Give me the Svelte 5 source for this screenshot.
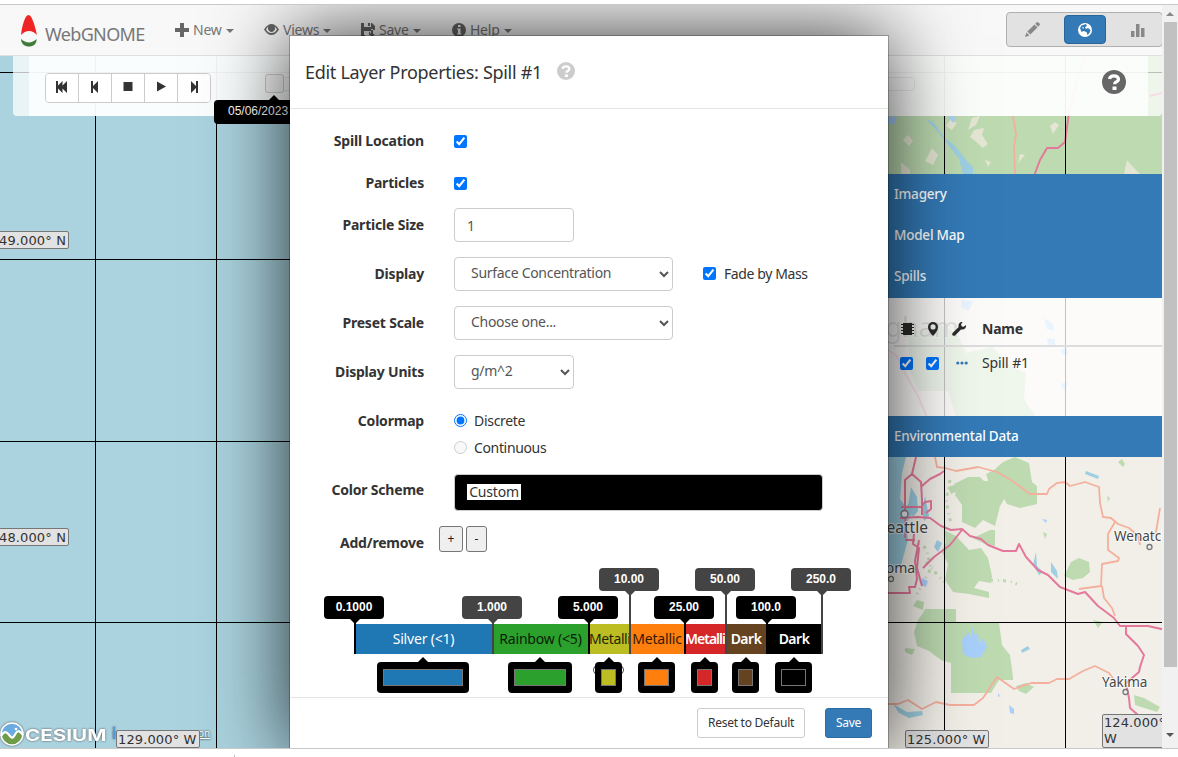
<script>
  const stops = [
    { at: 0, label: '0.1000', high: false },
    { at: 138, label: '1.000', high: false, grey: true },
    { at: 234, label: '5.000', high: false },
    { at: 275, label: '10.00', high: true, grey: true },
    { at: 330, label: '25.00', high: false },
    { at: 371, label: '50.00', high: true, grey: true },
    { at: 412, label: '100.0', high: false },
    { at: 467, label: '250.0', high: true, grey: true }
  ];
  const bands = [
    { name: 'Silver (<1)', color: '#1f77b4', text: '#fff', w: 138, sw: 80 },
    { name: 'Rainbow (<5)', color: '#2ca02c', text: '#082008', w: 96, sw: 52 },
    { name: 'Metallic', color: '#bcbd22', text: '#252506', w: 41, sw: 15, ring: true, left: true },
    { name: 'Metallic', color: '#ff7f0e', text: '#331902', w: 55, sw: 25 },
    { name: 'Metallic', color: '#d62728', text: '#fff', w: 41, sw: 15, bold: true, left: true },
    { name: 'Dark', color: '#654321', text: '#fff', w: 41, sw: 15, bold: true },
    { name: 'Dark', color: '#000', text: '#fff', w: 55, sw: 25, bold: true }
  ];
  const playback = [
    'M1 1h2v4.500l4.500-4.500v4.500l4.500-4.500v12l-4.500-4.500v4.500l-4.500-4.500v4.500h-2z',
    'M3 1h2v5l5-5v12l-5-5v5h-2z',
    'M2.500 2h9v9h-9z',
    'M3 1.500l9 5-9 5z',
    'M11 1h-2v5l-5-5v12l5-5v5h2z'
  ];
</script>

<div class="viewport">
  <div class="page">
    <svg class="map" width="1162" height="743" viewBox="0 5 1162 743">
      <rect y="5" width="1162" height="743" fill="#aad3df" />
      <rect x="870" y="5" width="292" height="743" fill="#f2efe9" />
      <g fill="#bddab1">
        <path d="M870 50h292v125h-292z" />
        <path d="M908 335l30-12 20 12 8 18 26-6 20 20 14 6-2 26 12 18h-80l-8-26h-30l-8-20z" />
        <path d="M1003 462l12-5 14 6 3 19 5 4v18l-17 4-13-4-9-16-8-2-4-12 8-4z" />
        <path d="M968 477h12l4 4h18l4 6v9l-6 10-5 20-12-6-8 8-13-6v-17l-7-10 2-8-3-3 8-4z" />
        <path d="M990 530h5v16l-10-2-12-6z" />
        <path d="M944 530l12 6 13 14 12-2 7 10 4 18-1 7-12-2-5 7 15 4v6l-20-4-16-2-8-12 3-16-6-12 4-10z" />
        <path d="M925 609h31v14h43l3 22 8 10 3 22v3h-14l-8 13h-40v-30l-10-3-12-9-12-5-3-14 4-12 5-7z" />
        <path d="M1016 686l10-3 8 4-8 7-7-3zM1071 562l8-4 10 4 1 10-7 6-10 2-9-4zM1134 695l10 3 16 9-3 5-22-7zM948 487l12-4 4 5-13 6z" />
        <path d="M1118 462l4-3 3 5-2 3zM1107 496l3 2-2 4zM1043 532l4 2-2 5zM905 648l10 1-3 6-7-3zM917 600l7 2-1 8-10-4zM1093 620l10 2-5 6z" />
      </g>
      <g fill="#e4e5d2">
        <path d="M950 120l7 3-5 7-6-4zM974 130l10-2-2 7 6 9-5 4-8-7-5-4zM985 160l6 2-3 5zM908 135l5 6-4 5-6-6zM932 148l6 7-5 10-8-4zM901 162l9 8v4h-9zM1050 126l5-4 4 3-6 9zM1127 160l5 6 8 8h-16z" />
        <path d="M1020 154l5 1-7 8zM972 118l8-2-4 9-8 5z" />
      </g>
      <g fill="none" stroke="#bddab1" stroke-width="3" stroke-dasharray="3 5 1 4">
        <path d="M950 480l-4 20 5 24M912 540l14 8 5 20-14 26M1000 468l10 13 17 5M990 580l19 1 8 3M1075 565l7 12M926 562l18 20" />
      </g>
      <g fill="#9ecfe2">
        <path d="M926 119l7 3 11 15 11 9 12 15 6 6v7h-10l-4-15-10-13-10-13z" />
        <path d="M888 457h18l-4 16-2 26 6 8 6-8 3 11-9 13 2 17-7 25-6 6h-7z" />
        <path d="M911 487l6 10 1 14-5 6-5-11zM925 496l4 20-5 5-2-10zM937 540l5 3-4 9-4-5z" />
        <path d="M893 704l14 8 15-1 1 4-14 3-10-5zM1086 471l13 5-1 3-13-5zM1036 552l1 14 6 6-4 3-6-10zM1051 562l6 9 1 8-7-7zM1021 650l7-4 2 3-8 4z" />
      </g>
      <g fill="#a8d0fb">
        <path d="M888 116l9 1-3 8-6-2zM948 116l8 1-3 6zM1044 318l9 6 1 7-7-2zM1047 338l8 1v8h-7zM1060 350l7-2 1 7-6-1zM1060 384l8-2-3 9zM961 300l12 1-4 10-8-4z" />
        <path d="M962 640l6-8 3 5 1-11 3 9 3-2 1 11 4-6 4 9-6 10-10 1-8-4zM1042 519l5 1-1 3zM1009 705l5 4v5l-4-1zM998 693l2 3-2 1zM922 578l6 3-2 6-5-2z" />
      </g>
      <g fill="none" stroke="#f4b09c" stroke-width="1.800" stroke-linejoin="round">
        <path d="M1013 116l3 18-2 14 1 26" />
        <path d="M935 457l2 10 8 1 11 3 22-4 19 5 14 8 19 14h17l2-5 8-6 8-1 5 4 15-4 14 5 1 16 3 14 8 1 7 6 11 4 9 8 2 9" />
        <path d="M1115 522l-7 12v16l11 8-1 3-16 3-1 22-22 3M1102 586l2 12 8 10 3 8M1160 508l-4 24-5 5" />
        <path d="M888 704h10l10-4 14 9 14-7 14 3h24l9-7 14-21 17 12 17-6h18l8-4h12l14-8 12-5 14 7 6 8" />
      </g>
      <g fill="none" stroke="#e4799b" stroke-width="2" stroke-linejoin="round">
        <path d="M1085 56l-8 24-8 32-4 30-7 6h-11l-7 12-6 16" />
        <path d="M1150 96l12-3" />
        <path d="M916 457l-4 17-7 6v38l1 8-1 12M912 474l9 8 1 18v15M922 486l8-7 10-5 4-3M901 507h20l4-5 6-1v8l-5 4M900 518l18-1 12 1 11 8 10 4 11-1 8 7 11 3 7 6 15 6h13l3-7 7 13 12 13 10 5 12 12 18 7 7-2 13 14 16 12 6 8h28l18 4M888 593h22l-1-6h6l2-8-2-18 4-21M905 540l10 0M914 534l-1 10 6 4-2 20 5 18M923 568l11-11 16-12 8-10 4-5" />
        <path d="M1126 627v7l12 12 6 9-4 12-1 5-14 12M1126 684l3 14 1 10 8 7" />
        <path d="M880 345l16 10 9 18 14 25 9 22" stroke-opacity=".7" />
      </g>
      <g fill="#eee" stroke="#777" stroke-width="1.300">
        <circle cx="904.500" cy="514" r="3.500" /><circle cx="891" cy="579" r="2.500" />
        <circle cx="1149.500" cy="547" r="2.500" /><circle cx="1125.500" cy="692" r="2.500" />
      </g>
      <g class="place">
        <text x="878" y="533" font-size="15.500">Seattle</text>
        <text x="879" y="573" font-size="14">coma</text>
        <text x="1114" y="541" font-size="13.500">Wenatchee</text>
        <text x="1102" y="687" font-size="13.500">Yakima</text>
        <text x="959" y="337" font-size="27" text-anchor="end" opacity=".6">Bellingham</text>
      </g>
      <path d="M95.500 5v743M216.500 5v743M944.500 5v743M1065.500 5v743M0 72.500h1162M0 259.500h1162M0 441.500h1162M0 622.500h1162" fill="none" stroke="#000" />
    </svg>

    <nav class="navbar">
      <div class="brand">
        <svg width="18" height="34" viewBox="0 0 18 34">
          <path d="M1 21C2 12 5 1 8.500 1S15 12 17 21C12 15.500 6 15.500 1 21z" fill="#ee2524" />
          <path d="M1 25c5 4.500 11 4.500 15.500 0C17 30 13 32.500 9 32.500S1 30 1 25z" fill="#3f7c39" />
        </svg>
        <span>WebGNOME</span>
      </div>
      <div class="menus">
        <span class="m1"><svg width="14" height="14" viewBox="0 0 14 14"><path d="M5 0h4v5h5v4h-5v5h-4v-5h-5v-4h5z" /></svg>New<i class="caret"></i></span>
        <span class="m2"><svg width="15" height="13" viewBox="0 0 15 13"><path fill-rule="evenodd" d="M0 6.500Q3.500 1 7.500 1T15 6.500Q11.500 12 7.500 12T0 6.500zM2 6.500Q4 10 7.500 10T13 6.500Q12 4.500 10.500 3.600A3.500 3.500 0 1 1 4.500 3.600Q3 4.500 2 6.500z" /><circle cx="7.500" cy="5.500" r="2.800" /></svg>Views<i class="caret"></i></span>
        <span class="m3"><svg width="14" height="14" viewBox="0 0 14 14"><path fill-rule="evenodd" d="M0 0h3v4h7v-4h1l3 3v4h-2v-1h-2v2h-2l2 3v1h-2v-4h-5v4h1v2h-4zM7 0h2v3h-2z" /><path d="M10 7h2v4h2l-3 3-3-3h2z" /></svg>Save<i class="caret"></i></span>
        <span class="m4"><svg width="14" height="14" viewBox="0 0 14 14"><path fill-rule="evenodd" d="M7 0a7 7 0 1 1 0 14A7 7 0 0 1 7 0zM6 2v2h2.500v-2zM5 5.500v1h1v4h-1v1h4.500v-1h-1v-5z" /></svg>Help<i class="caret"></i></span>
      </div>
      <div class="modes">
        <span><svg width="15" height="15" viewBox="0 0 15 15" fill="#888"><path d="M0 15l1.500-4.500 3 3zM2.300 9.600l7.200-7.100 3 3-7.200 7.100zM10.300 1.700l1.200-1.200q1-.8 2 .1l1 1q.8 1-.1 1.900l-1.200 1.200z" /></svg></span>
        <span class="on"><svg width="14" height="14" viewBox="0 0 14 14"><circle cx="7" cy="7" r="7" fill="#fff" /><path d="M3.500 2.500L8 1l1 2-2 1 1 2 2-1 2.500 2-1 3-2 2-1-3-3-1-2 1-1.500-4z" fill="#337ab7" /><path d="M8.500 2.500l2 1-1 1.500zM3.500 5l2-1 .5 1.500z" fill="#fff" /></svg></span>
        <span><svg width="14" height="14" viewBox="0 0 14 14" fill="#888"><path d="M0 8h3.500v6h-3.500zM5 1h3.500v13h-3.500zM10 5h3.500v9h-3.500z" /></svg></span>
      </div>
    </nav>

    <div class="toolbar">
      <div class="inner">
        <div class="play">
          {#each playback as d}
            <button aria-label="playback"><svg width="14" height="14" viewBox="0 0 14 14"><path {d} fill="#333" /></svg></button>
          {/each}
        </div>
        <div class="slider"><i></i><b>05/06/2023</b></div>
      </div>
      <svg class="help" width="24" height="24" viewBox="0 0 24 24"><circle cx="12" cy="12" r="12" fill="#666" /><path d="M7.500 9Q8 5.800 12 5.800T16.500 9q0 2-2.800 3.300-1 .5-1 2" fill="none" stroke="#fff" stroke-width="3.200" /><path d="M10.500 16.500h4v3.500h-4z" fill="#fff" /></svg>
    </div>

    <aside>
      <h4>Imagery</h4>
      <h4>Model Map</h4>
      <h4>Spills</h4>
      <div class="layers">
        <div class="lhead">
          <svg width="13" height="12" viewBox="0 0 13 12"><path d="M2 0h9v1h2v1h-2v2h2v1h-2v2h2v1h-2v2h2v1h-2v1h-9v-1h-2v-1h2v-2h-2v-1h2v-2h-2v-1h2v-2h-2v-1h2z" /></svg>
          <svg width="10" height="14" viewBox="0 0 10 14"><path fill-rule="evenodd" d="M5 0a5 5 0 0 1 5 5q0 4-5 9Q0 9 0 5a5 5 0 0 1 5-5zM5 2.300a2.600 2.600 0 1 0 0 5.200 2.600 2.600 0 0 0 0-5.200z" /></svg>
          <svg width="14" height="14" viewBox="0 0 14 14"><path d="M10.500 0L9 2.500l.8 2 2 .2L14 3q.3 2-1 3.500T9 7.400L3 13.400q-1 .8-2.200 0t-.2-2.400L6.700 5q-.7-2 .6-3.700T10.500 0z" /></svg>
          <b>Name</b>
        </div>
        <div class="lrow">
          <input type="checkbox" checked /><input type="checkbox" checked />
          <svg width="12" height="4" viewBox="0 0 12 4" fill="#337ab7"><circle cx="1.800" cy="2" r="1.600" /><circle cx="6" cy="2" r="1.600" /><circle cx="10.200" cy="2" r="1.600" /></svg>
          <span>Spill #1</span>
        </div>
      </div>
      <h4>Environmental Data</h4>
    </aside>

    <div class="credit">
      <svg width="24" height="24" viewBox="0 0 24 24"><circle cx="12" cy="12" r="11" fill="#6cabe0" /><path d="M1 14c4-6 6-4 9 0s4 0 6-3 4-2 7 2c-1 6-6 10-11 10S2 19 1 14z" fill="#709c49" /><path d="M1 14c4-6 6-4 9 0s4 0 6-3 4-2 7 2" fill="none" stroke="#fff" stroke-width="2.200" /><circle cx="12" cy="12" r="11" fill="none" stroke="#fff" stroke-width="1.500" /><circle cx="16" cy="7" r="1.300" fill="#fff" /></svg>
      <b>CESIUM</b><em>i</em>
    </div>
    <u class="attr">on</u>
    <span class="geo" style:left="-3px" style:top="226px">49.000° N</span>
    <span class="geo" style:left="-3px" style:top="523px">48.000° N</span>
    <span class="geo" style:left="116px" style:top="725px">129.000° W</span>
    <span class="geo" style:left="905px" style:top="725px">125.000° W</span>
    <span class="geo wrap" style:left="1102px" style:top="709px">124.000°<br />W</span>

    <div class="modal">
      <header>
        <h3>Edit Layer Properties: Spill #1</h3>
        <svg width="18" height="18" viewBox="0 0 24 24"><circle cx="12" cy="12" r="12" fill="#ccc" /><path d="M7.500 9Q8 5.800 12 5.800T16.500 9q0 2-2.800 3.300-1 .5-1 2" fill="none" stroke="#fff" stroke-width="3.200" /><path d="M10.500 16.500h4v3.500h-4z" fill="#fff" /></svg>
      </header>
      <div class="body">
        <div class="row"><label for="loc">Spill Location</label><input id="loc" type="checkbox" checked /></div>
        <div class="row"><label for="par">Particles</label><input id="par" type="checkbox" checked /></div>
        <div class="row size"><label for="size">Particle Size</label><input id="size" class="field small" type="text" value="1" /></div>
        <div class="row tall"><label for="disp">Display</label><select id="disp" class="field wide"><option>Surface Concentration</option></select><input class="fade" id="fade" type="checkbox" checked /><span class="opt">Fade by Mass</span></div>
        <div class="row tall"><label for="preset">Preset Scale</label><select id="preset" class="field wide"><option>Choose one...</option></select></div>
        <div class="row tall"><label for="units">Display Units</label><select id="units" class="field small"><option>g/m^2</option></select></div>
        <div class="row tall"><label for="disc">Colormap</label><input id="disc" type="radio" name="map" checked /><span class="opt">Discrete</span></div>
        <div class="row cont"><label for="cont"></label><input id="cont" type="radio" name="map" disabled /><span class="opt">Continuous</span></div>
        <div class="row scheme"><label for="scheme">Color Scheme</label><div class="swatchbox" id="scheme"><span>Custom</span></div></div>
        <div class="row add"><label for="plus">Add/remove</label><button id="plus">+</button><button class="minus">-</button></div>

        <div class="scale">
          {#each bands as b}
            <div class="band" class:bold={b.bold} class:left={b.left} style:width={b.w + 'px'} style:background={b.color} style:color={b.text}><span>{b.name}</span></div>
          {/each}
          {#each stops as s}
            <div class="stop" class:high={s.high} class:grey={s.grey} style:left={s.at + 'px'}><b>{s.label}</b></div>
          {/each}
        </div>
        <div class="picks">
          {#each bands as b}
            <div class="cell" style:width={b.w + 'px'}>
              {#if b.ring}<em></em>{/if}
              <div class="pick"><i style:width={b.sw + 'px'} style:background={b.color}></i></div>
            </div>
          {/each}
        </div>
      </div>
      <footer><button>Reset to Default</button><button class="primary">Save</button></footer>
    </div>
  </div>
  <div class="scrollbar"><i class="up"></i><div class="thumb"></div><i class="down"></i></div>
</div>
<div class="tick"></div>

<style>
  :global(body) { background: #fff; font: 14px/20px "Noto Sans", sans-serif; color: #333; overflow: hidden; }
  * { box-sizing: border-box; }
  svg { display: block; flex: none; }
  .viewport { display: flex; margin-top: 4px; height: 745px; border-top: 1px solid #c9c9c9; border-bottom: 1px solid #c9c9c9; }
  .page { position: relative; width: 1162px; height: 743px; overflow: hidden; }
  .map { position: absolute; inset: 0; }
  .place text { font-family: "Noto Sans", sans-serif; fill: #484848; stroke: #fff; stroke-width: 2px; stroke-opacity: .7; paint-order: stroke; }
  .navbar { position: relative; display: flex; align-items: flex-start; height: 51px; background: #f8f8f8; border-bottom: 1px solid #e0e0e0; color: #777; }
  .brand { display: flex; width: 175px; padding: 9px 0 0 20px; gap: 7px; font-size: 18px; line-height: 41px; letter-spacing: -.65px; }
  .menus { display: flex; padding-top: 15px; fill: #666; }
  .menus span { display: flex; align-items: center; gap: 4px; height: 20px; letter-spacing: -.25px; }
  .menus svg { margin-top: -1px; }
  .m1 { width: 89px; } .m2 { width: 97px; } .m3 { width: 91px; }
  .caret { border: 4px solid transparent; border-top-color: currentColor; border-bottom: 0; margin-top: 2px; }
  .modes { display: flex; margin-left: auto; width: 157px; height: 35px; margin-top: 7px; margin-right: -1px; padding: 2px; background: #e2e2e2; border: 1px solid #b0b0b0; border-radius: 4px; }
  .modes span { display: flex; flex: none; align-items: center; justify-content: center; width: 47px; height: 29px; margin-right: 8px; }
  .modes span.on { width: 42px; background: #337ab7; border: 1px solid #2a6599; border-radius: 4px; }
  .toolbar { position: relative; width: 1149px; height: 60px; margin-left: 13px; display: flex; background: rgba(255, 255, 255, .74); border-radius: 0 0 4px 4px; }
  .inner { display: flex; width: 1119px; margin-left: 16px; padding: 17px 0 0 16px; background: rgba(255, 255, 255, .78); }
  .play { display: flex; height: 30px; border: 1px solid #ccc; border-radius: 4px; background: #fff; overflow: hidden; }
  .play button { display: flex; align-items: center; justify-content: center; width: 33px; padding: 0 0 2px; border: 0; border-right: 1px solid #ccc; background: #fff; }
  .play button:last-child { border: 0; width: 32px; }
  .slider { position: relative; width: 650px; height: 14px; margin: 4px 0 0 54px; border: 1px solid #eaeaea; border-radius: 4px; }
  .slider i { position: absolute; left: -1px; top: -4px; width: 19px; height: 19px; border: 1px solid #ccc; border-radius: 3px; background: #f6f6f6; }
  .slider b { position: absolute; left: -52px; top: 22px; width: 120px; height: 24px; background: #000; color: #fff; border-radius: 4px; font: 12px/22px "Liberation Sans", sans-serif; padding-left: 14px; }
  .slider b::before { content: ""; position: absolute; left: 55px; top: -5px; border: 5px solid transparent; border-top: 0; border-bottom-color: #000; }
  .help { position: absolute; left: 1089px; top: 14px; }
  aside { position: absolute; left: 870px; top: 169px; width: 292px; }
  h4 { margin: 0; height: 41px; padding-left: 24px; font: 500 13.500px/40px "Noto Sans", sans-serif; letter-spacing: -.22px; color: #fff; background: #337ab7; }
  h4:nth-child(3) { height: 42px; }
  .layers { height: 118px; padding: 14px 0 0 24px; background: rgba(255, 255, 255, .76); }
  .lhead { display: flex; align-items: center; height: 35px; padding-left: 7px; border-bottom: 2px solid #ddd; fill: #2b2b2b; }
  .lhead svg:nth-child(2) { margin-left: 14px; } .lhead svg:nth-child(3) { margin-left: 14px; } .lhead b { margin-left: 16px; letter-spacing: -.2px; }
  .lrow { display: flex; align-items: center; height: 32px; padding-left: 6px; }
  .lrow input + input { margin-left: 13px; } .lrow svg { margin-left: 17px; } .lrow span { margin-left: 14px; letter-spacing: -.1px; }
  input[type=checkbox], input[type=radio] { margin: 0; width: 13px; height: 13px; flex: none; }
  .credit { position: absolute; left: 0; bottom: 1px; display: flex; align-items: center; height: 26px; color: #fff; filter: drop-shadow(0 0 1px #555); }
  .credit b { font: bold 16px/20px "Inter", sans-serif; width: 81px; margin: 2px 6px 0 1px; transform: scaleX(1.29); transform-origin: 0 0; }
  .credit em { font: bold 15px/20px "Inter", sans-serif; color: #4b9bdf; }
  .attr { position: absolute; left: 198px; top: 718px; font-size: 10px; color: #fff; text-shadow: 0 0 2px #000; }
  .geo { position: absolute; height: 18px; padding: 0 2px 0 1px; border: 1px solid #777; border-radius: 2px; background: #e2e2e2; font: 13px/17px "DejaVu Sans", sans-serif; white-space: nowrap; color: #333; letter-spacing: .13px; }
  .geo.wrap { height: 34px; width: 80px; line-height: 16px; letter-spacing: .1px; }
  .modal { position: absolute; left: 289px; top: 30px; width: 600px; background: #fff; border: 1px solid rgba(0, 0, 0, .25); background-clip: padding-box; box-shadow: 0 0 76px rgba(0, 0, 0, .78); }
  header { display: flex; height: 73px; padding: 26px 15px; gap: 16px; border-bottom: 1px solid #e5e5e5; }
  h3 { margin: 0; width: 236px; white-space: nowrap; letter-spacing: -.3px; font: 400 18px/20px "Noto Sans", sans-serif; }
  .body { height: 588px; padding-top: 11px; }
  .row { display: flex; align-items: center; height: 42px; }
  .row label { width: 134px; margin-right: 30px; text-align: right; font-weight: 700; letter-spacing: -.2px; }
  .size { margin-bottom: 3px; } .tall { height: 49px; }
  .field { height: 34px; border: 1px solid #ccc; border-radius: 4px; background: #fff; color: #555; padding: 6px 12px; font: 14px/20px "Noto Sans", sans-serif; letter-spacing: -.3px; }
  select.field { padding: 0 12px 2px; }
  .small { width: 120px; } .wide { width: 219px; }
  .fade { margin-left: 30px !important; }
  .opt { margin-left: 7px; letter-spacing: -.3px; }
  .fade + .opt { margin-left: 8px; letter-spacing: -.4px; }
  .cont { height: 27px; margin-top: -11px; }
  .cont .opt { letter-spacing: -.35px; }
  .scheme { height: 37px; margin-top: 13px; align-items: flex-start; }
  .scheme label { margin-top: 6px; }
  .swatchbox { width: 369px; height: 37px; padding: 8px 12px; background: #000; border: 1px solid #ccc; border-radius: 4px; }
  .swatchbox span { display: block; width: 54px; height: 16px; margin-top: 1px; line-height: 15px; background: #fff; text-align: center; letter-spacing: -.2px; }
  .add { height: 27px; margin-top: 15px; align-items: flex-start; }
  .add label { margin: 7px 15px 0 0; }
  .add button { width: 24px; height: 26px; margin-right: 3px; padding: 0; border: 1px solid #767676; border-radius: 3px; background: #efefef; font: 12px/20px "Noto Sans", sans-serif; color: #222; }
  .add .minus { width: 21px; }
  .scale { position: relative; display: flex; height: 30px; margin: 71px 0 0 64px; }
  .band { height: 30px; line-height: 29px; overflow: hidden; display: flex; justify-content: center; padding-left: 1px; letter-spacing: -.2px; }
  .band span { flex: none; }
  .band.left { justify-content: flex-start; letter-spacing: -.4px; }
  .band.bold { font-weight: 600; letter-spacing: -.5px; }
  .band.bold.left { letter-spacing: -1px; }
  .stop { position: absolute; top: -6px; bottom: 0; width: 2px; background: #000; }
  .stop.high { top: -34px; }
  .stop b { position: absolute; left: -30px; bottom: 100%; margin-bottom: -1px; width: 60px; height: 23px; border-radius: 4px; background: #000; color: #fff; font: bold 12px/22px "Liberation Sans", sans-serif; text-align: center; }
  .stop b::after { content: ""; position: absolute; left: 26px; top: 23px; border: 5px solid transparent; border-bottom: 0; border-top-color: #000; }
  .grey, .grey b { background: #444; } .grey b::after { border-top-color: #444; }
  .picks { display: flex; margin: 8px 0 0 64px; }
  .cell { position: relative; display: flex; justify-content: center; flex: none; }
  .pick { position: relative; flex: none; height: 31px; padding: 7px 6px; border-radius: 4px; background: #000; }
  .pick::before { content: ""; position: absolute; left: calc(50% - 5px); top: -5px; border: 5px solid transparent; border-top: 0; border-bottom-color: #000; }
  .pick i { display: block; height: 17px; border: 1px solid #767676; }
  .cell em { position: absolute; left: 5px; top: 0; width: 31px; height: 16px; border: 1px solid #555; border-radius: 50%; }
  footer { display: flex; justify-content: flex-end; height: 56px; padding: 10px 16px; gap: 20px; border-top: 1px solid #e5e5e5; }
  footer button { width: 108px; height: 30px; padding: 0; border: 1px solid #ccc; border-radius: 3px; background: #fff; color: #333; font: 12px/18px "Noto Sans", sans-serif; letter-spacing: -.25px; }
  footer .primary { width: 47px; background: #337ab7; border-color: #2e6da4; color: #fff; }
  .scrollbar { display: flex; flex-direction: column; align-items: center; width: 16px; background: #f1f1f1; padding-top: 7px; }
  .up { border: 4px solid transparent; border-top: 0; border-bottom-color: #888; }
  .thumb { width: 13px; height: 645px; margin: 6px 0 66px 1px; background: #c1c1c1; }
  .down { border: 4px solid transparent; border-bottom: 0; border-top-color: #555; }
  .tick { width: 1px; height: 2px; margin: 6px 0 0 234px; background: #bbb; }
</style>
